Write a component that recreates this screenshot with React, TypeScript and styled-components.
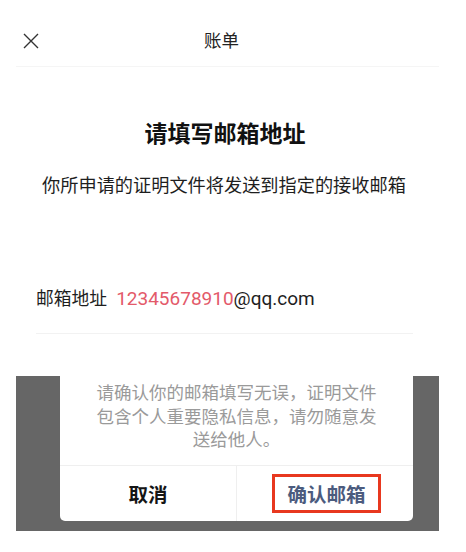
import React from "react";
import styled, { createGlobalStyle } from "styled-components";

const GlobalStyle = createGlobalStyle`
  * { box-sizing: border-box; }
  html, body { margin: 0; padding: 0; background: #ffffff; }
  body {
    font-family: Roboto, "Noto Sans CJK SC", "Noto Sans", sans-serif;
    color: #1a1a1a;
  }
`;

const Page = styled.div`
  width: 466px;
  height: 552px;
  background: #ffffff;
  overflow: hidden;
`;

const Content = styled.div`
  margin: 0 27px 0 16px;
`;

const Header = styled.header`
  position: relative;
  height: 67px;
  padding-top: 16px;
  border-bottom: 1px solid #f5f5f5;
  display: flex;
  align-items: flex-start;
  justify-content: center;
`;

const CloseButton = styled.button`
  position: absolute;
  left: 7px;
  top: 33px;
  width: 16px;
  height: 16px;
  padding: 0;
  border: none;
  background: none;
  display: flex;
`;

const Title = styled.h1`
  margin: 0 12px 0 0;
  height: 50px;
  line-height: 50px;
  font-size: 17.5px;
  font-weight: 400;
  color: #222;
`;

const Heading = styled.h2`
  margin: 52px 5px 0 0;
  text-align: center;
  font-size: 23px;
  line-height: 32px;
  font-weight: 700;
  color: #111;
`;

const Subtitle = styled.p`
  margin: 22px 7px 0 0;
  text-align: center;
  font-size: 18.2px;
  line-height: 26px;
  color: #1e1e1e;
  white-space: nowrap;
`;

const EmailRow = styled.div`
  margin: 86px 26px 0 20px;
  padding-bottom: 20px;
  border-bottom: 1px solid #f2f2f2;
  display: flex;
  align-items: baseline;
  line-height: 28px;
`;

const Label = styled.span`
  font-size: 17.8px;
  color: #1e1e1e;
`;

const Address = styled.span`
  margin-left: 9px;
  font-family: Roboto, sans-serif;
  font-size: 19px;
  color: #1e1e1e;
`;

const Highlight = styled.span`
  color: #e35a6a;
`;

const Backdrop = styled.div`
  margin-top: 42px;
  height: 155px;
  background: #666666;
  padding: 0 26px 10px 44px;
`;

const Dialog = styled.div`
  height: 100%;
  background: #ffffff;
  border-radius: 0 0 5px 5px;
  display: flex;
  flex-direction: column;
`;

const Message = styled.p`
  margin: 0;
  padding: 6px 36px 12px;
  text-align: center;
  font-size: 17.5px;
  line-height: 23.5px;
  color: #9a9a9a;
  border-bottom: 1px solid #efefef;
`;

const Actions = styled.div`
  flex: 1;
  display: grid;
  grid-template-columns: 176px 1fr;
`;

const Action = styled.button<{ $primary?: boolean }>`
  border: none;
  background: none;
  padding: 0;
  display: flex;
  align-items: center;
  justify-content: center;
  font-family: "Noto Sans CJK SC", sans-serif;
  font-size: 19.5px;
  font-weight: 700;
  color: ${(p) => (p.$primary ? "#4b5b7e" : "#151515")};
  border-left: ${(p) => (p.$primary ? "1px solid #efefef" : "none")};
`;

const Marked = styled.span`
  border: 3px solid #e8381f;
  padding: 4px 12px;
  line-height: 25px;
  margin-left: 3px;
`;

export default function App() {
  return (
    <Page>
      <GlobalStyle />
      <Content>
        <Header>
          <CloseButton aria-label="关闭">
            <svg width="16" height="16" viewBox="0 0 16 16">
              <path d="M1 1 L15 15 M15 1 L1 15" stroke="#333" strokeWidth="1.4" fill="none" />
            </svg>
          </CloseButton>
          <Title>账单</Title>
        </Header>
        <Heading>请填写邮箱地址</Heading>
        <Subtitle>你所申请的证明文件将发送到指定的接收邮箱</Subtitle>
        <EmailRow>
          <Label>邮箱地址</Label>
          <Address>
            <Highlight>12345678910</Highlight>@qq.com
          </Address>
        </EmailRow>
        <Backdrop>
          <Dialog>
            <Message>请确认你的邮箱填写无误，证明文件包含个人重要隐私信息，请勿随意发送给他人。</Message>
            <Actions>
              <Action>取消</Action>
              <Action $primary>
                <Marked>确认邮箱</Marked>
              </Action>
            </Actions>
          </Dialog>
        </Backdrop>
      </Content>
    </Page>
  );
}
